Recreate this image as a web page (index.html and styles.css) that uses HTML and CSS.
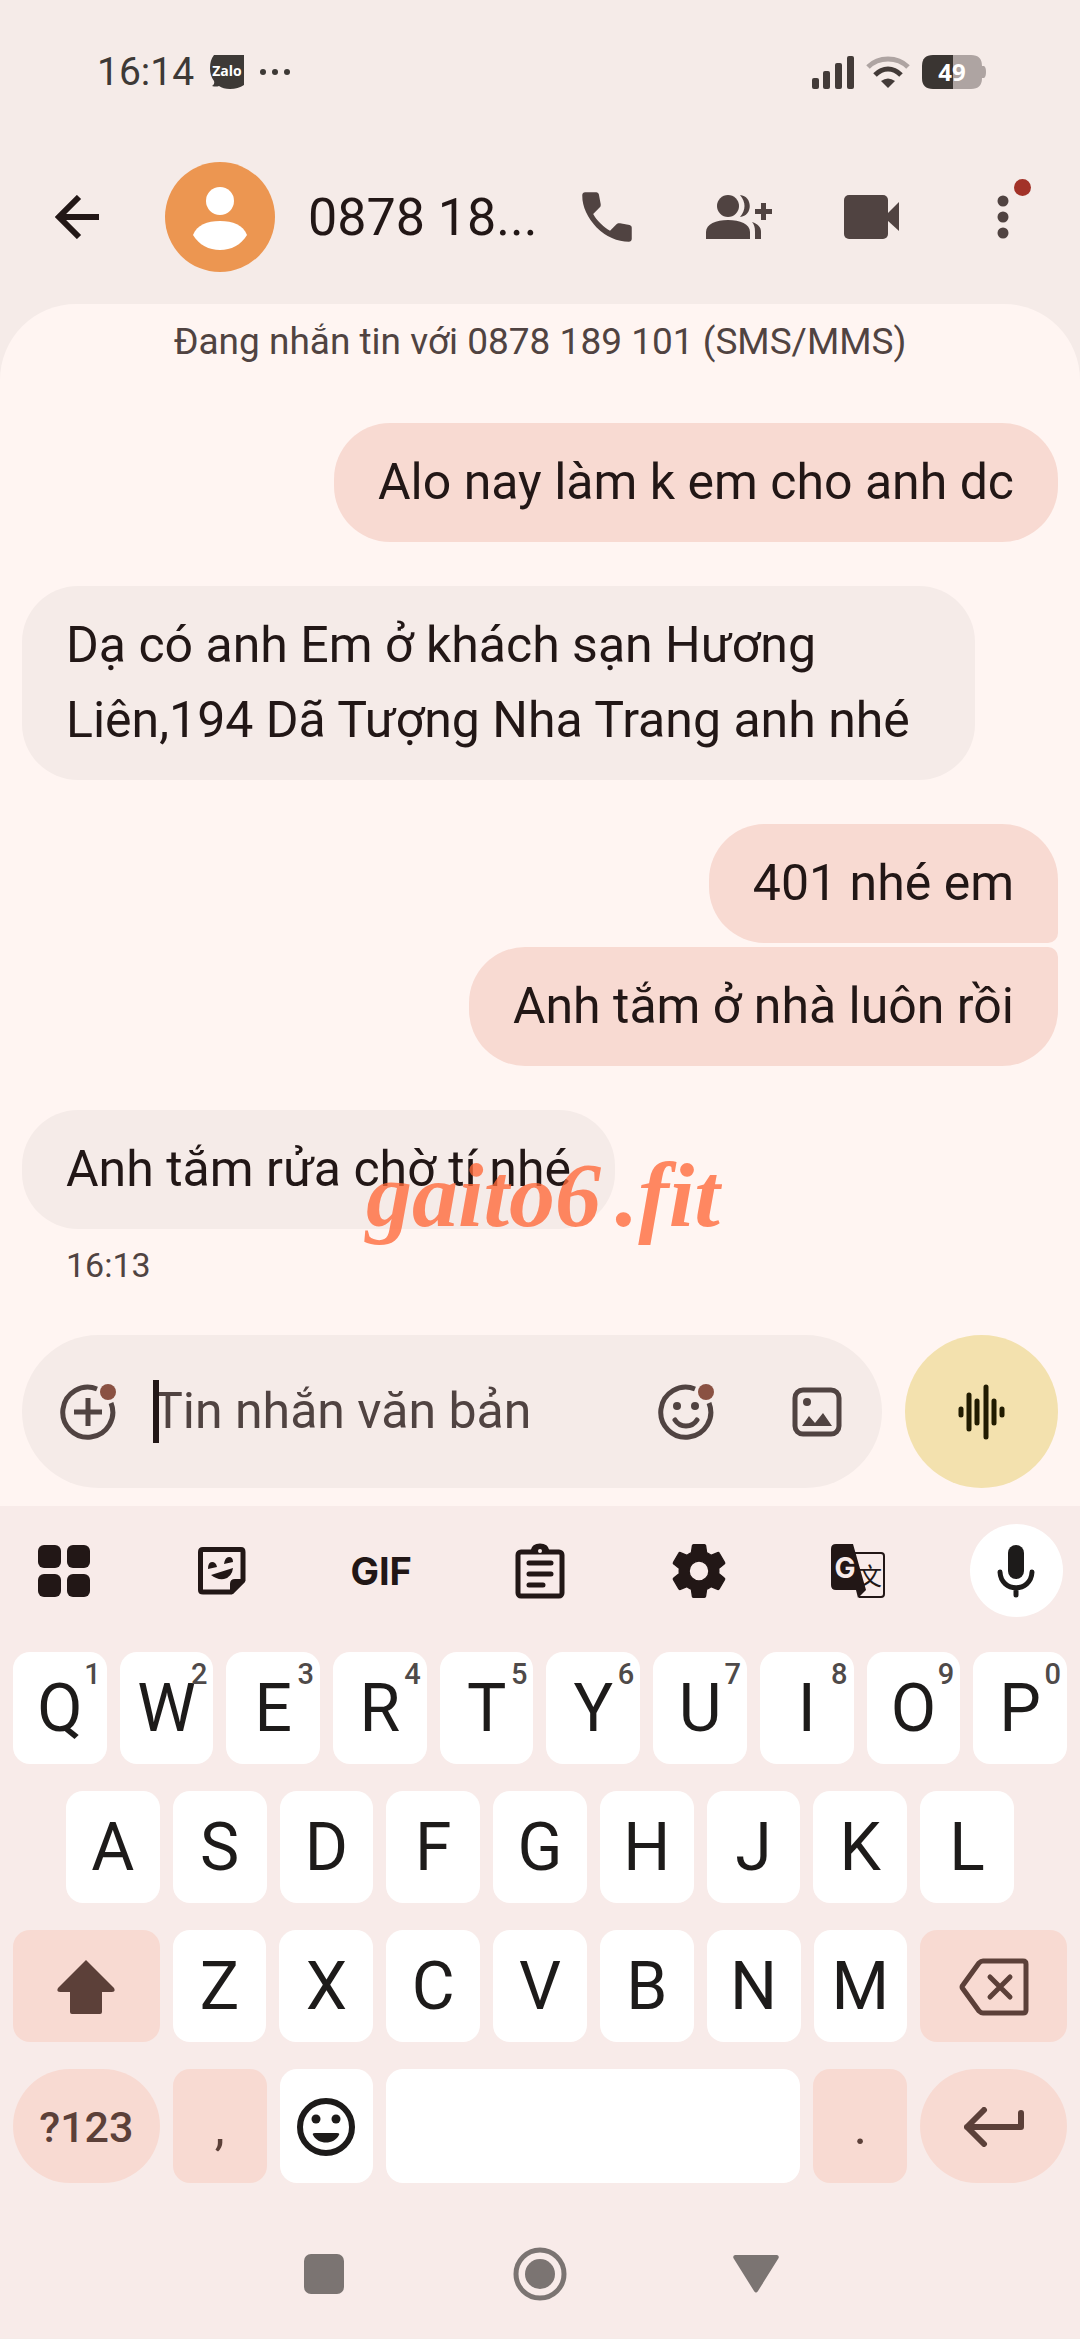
FILE: index.html
```html
<!DOCTYPE html>
<html lang="vi">
<head>
<meta charset="utf-8">
<meta name="viewport" content="width=device-width, initial-scale=1">
<title>0878 189 101</title>
<link rel="stylesheet" href="styles.css">
</head>
<body>
<div class="status">
  <span class="clock">16:14</span>
  <svg class="zalo" width="34" height="34" viewBox="0 0 34 34" aria-hidden="true">
    <path d="M4 0H34V30Q28 34 20 34Q13 34 9 31Q6 32 2 31Q5 29 4 26Q0 21 0 13Q0 5 4 0Z" fill="#3d3936"/>
    <text x="17" y="21" text-anchor="middle" class="zalo-text">Zalo</text>
  </svg>
  <svg width="30" height="6" viewBox="0 0 30 6" aria-hidden="true" fill="#3d3936"><circle cx="3" cy="3" r="3"/><circle cx="15" cy="3" r="3"/><circle cx="27" cy="3" r="3"/></svg>
  <span class="spacer"></span>
  <svg width="42" height="34" viewBox="0 0 42 34" aria-hidden="true" fill="#433b38"><rect x="0" y="23" width="7" height="11" rx="2"/><rect x="11" y="16" width="7" height="18" rx="2"/><rect x="23" y="8" width="7" height="26" rx="2"/><rect x="35" y="1" width="7" height="33" rx="2"/></svg>
  <svg class="wifi" width="44" height="34" viewBox="0 0 44 34" aria-hidden="true" fill="none" stroke-width="5">
    <path d="M2 12Q10 4 22 4T42 12" stroke="#aea4a2"/>
    <path d="M9 20Q15 14 22 14T35 20" stroke="#433b38"/>
    <path d="M22 33L15 26Q22 21 29 26Z" fill="#433b38"/>
  </svg>
  <svg width="64" height="34" viewBox="0 0 64 34" aria-hidden="true">
    <path d="M31 0H49Q60 0 60 11H62Q64 12 64 17T62 23H60Q60 34 49 34H31Z" fill="#aea4a2"/>
    <path d="M31 0H11Q0 0 0 11V23Q0 34 11 34H31Z" fill="#3a3532"/>
    <text x="30" y="26" text-anchor="middle" class="battery-text">49</text>
  </svg>
</div>

<header class="header">
  <button class="back" aria-label="Quay lại"><svg width="44" height="44" viewBox="0 0 44 44" fill="none" stroke="#221716" stroke-width="6"><path d="M44 22H4M24 2L4 22L24 42"/></svg></button>
  <svg class="avatar" width="110" height="110" viewBox="0 0 110 110" aria-hidden="true"><circle cx="55" cy="55" r="55" fill="#ec9651"/><circle cx="55" cy="39" r="14" fill="#fff"/><path d="M28 73C32 63 42 59 55 59S78 63 82 73C76 83 66 88 55 88S34 83 28 73Z" fill="#fff"/></svg>
  <h1 class="title">0878 18...</h1>
  <button class="action" aria-label="Gọi"><svg width="66" height="66" viewBox="0 0 24 24" fill="#504341"><path d="M19.95 21q-3.125 0-6.175-1.363t-5.55-3.862-3.862-5.55T3 4.05q0-.45.3-.75t.75-.3H8.1q.35 0 .625.238t.325.562l.65 3.5q.05.4-.025.675T9.4 8.45L6.975 10.9q.5.925 1.187 1.787t1.513 1.663q.775.775 1.625 1.438T13.1 17l2.35-2.35q.225-.225.588-.338t.712-.062l3.45.7q.35.1.575.363T21 15.9v4.05q0 .45-.3.75t-.75.3Z"/></svg></button>
  <button class="action" aria-label="Thêm người"><svg width="66" height="44" viewBox="0 0 66 44" fill="#504341"><circle cx="22" cy="11" r="11"/><path d="M34 0C47 1 47 21 34 22C40 15 40 7 34 0ZM0 44V37C0 29 10 25 22 25S44 29 44 37V44ZM46 27C52 29 55 32 55 37V44H49V37C49 32 48 29 46 27ZM55 8H60V14H66V19H60V25H55V19H49V14H55Z"/></svg></button>
  <button class="action" aria-label="Gọi video"><svg width="55" height="44" viewBox="0 0 55 44" fill="#504341"><rect width="44" height="44" rx="5"/><path d="M43 19L55 7V36L43 25Z"/></svg></button>
  <button class="action" aria-label="Tùy chọn khác"><svg width="12" height="44" viewBox="0 0 12 44" fill="#504341"><circle cx="6" cy="6" r="5.5"/><circle cx="6" cy="22" r="5.5"/><circle cx="6" cy="38" r="5.5"/></svg><span class="alert"></span></button>
</header>

<main class="chat">
  <p class="note">Đang nhắn tin với 0878 189 101 (SMS/MMS)</p>
  <div class="group sent"><p class="bubble">Alo nay làm k em cho anh dc</p></div>
  <div class="group"><p class="bubble">Dạ có anh Em ở khách sạn Hương Liên,194 Dã Tượng Nha Trang anh nhé</p></div>
  <div class="group sent">
    <p class="bubble first">401 nhé em</p>
    <p class="bubble last">Anh tắm ở nhà luôn rồi</p>
  </div>
  <div class="group">
    <p class="bubble">Anh tắm rửa chờ tí nhé</p>
    <span class="watermark">gaito6<span class="tld">.fit</span></span>
  </div>
  <time class="time">16:13</time>

  <form class="composer">
    <div class="pill">
      <button type="button" class="tool" aria-label="Thêm"><svg width="56" height="56" viewBox="0 0 56 56" fill="none" stroke="#504341" stroke-width="5"><path d="M37 5A25 25 0 1 0 51 19M28 14V42M14 28H42"/><circle cx="48" cy="8" r="8" fill="#8a5142" stroke="none"/></svg></button>
      <div class="field"><input class="input" type="text" placeholder="Tin nhắn văn bản" aria-label="Tin nhắn văn bản"><span class="caret"></span></div>
      <button type="button" class="tool" aria-label="Biểu tượng cảm xúc"><svg width="56" height="56" viewBox="0 0 56 56" fill="none" stroke="#504341" stroke-width="5"><path d="M37 5A25 25 0 1 0 51 19"/><path d="M17 36C22 44 34 44 39 36" stroke-linecap="round"/><g stroke="none" fill="#504341"><circle cx="19" cy="22" r="4"/><circle cx="37" cy="22" r="4"/></g><circle cx="48" cy="8" r="8" fill="#8a5142" stroke="none"/></svg></button>
      <button type="button" class="tool" aria-label="Hình ảnh"><svg width="50" height="50" viewBox="0 0 50 50" fill="#504341"><rect x="3" y="3" width="44" height="44" rx="8" fill="none" stroke="#504341" stroke-width="5"/><circle cx="15" cy="15" r="4"/><path d="M10 39L17 29L23 36L31 26L40 39Z"/></svg></button>
    </div>
    <button type="button" class="voice" aria-label="Ghi âm"><svg width="48" height="56" viewBox="0 0 48 56" fill="none" stroke="#211b00" stroke-width="5" stroke-linecap="round"><path d="M3 25V31M11 11V45M19 17V39M28 3V53M36 17V39M44 25V31"/></svg></button>
  </form>
</main>

<section class="keyboard">
  <div class="toolbar">
    <button class="kbtool" aria-label="Menu"><svg width="54" height="54" viewBox="0 0 54 54" fill="#221716"><rect x="1" y="1" width="23" height="23" rx="6"/><rect x="30" y="1" width="23" height="23" rx="6"/><rect x="1" y="30" width="23" height="23" rx="6"/><rect x="30" y="30" width="23" height="23" rx="6"/></svg></button>
    <button class="kbtool" aria-label="Nhãn dán"><svg width="50" height="50" viewBox="0 0 50 50" fill="#221716"><path d="M6 3.500H44Q46 3.500 46 6V34L34 46H6Q3.500 46 3.500 44V6Q3.500 3.500 6 3.500Z" fill="none" stroke="#221716" stroke-width="5"/><path d="M48 33H38Q33 33 33 38V48H36L48 36ZM11 23Q11 16 15 16T20 21ZM27 18Q28 11 32 11T36 16ZM14 29L36 22Q35 31 27 33Q20 34 14 29Z"/></svg></button>
    <button class="kbtool gif">GIF</button>
    <button class="kbtool" aria-label="Bảng nhớ tạm"><svg width="50" height="56" viewBox="0 0 50 56" fill="none" stroke="#221716" stroke-width="5" stroke-linecap="round"><rect x="3" y="9" width="44" height="44" rx="3"/><path d="M14 20H36M14 31H36M14 42H28"/><path d="M18 8Q19 3 25 3T32 8Z" fill="#221716"/><circle cx="25" cy="8" r="2" fill="#f8ebe9" stroke="none"/></svg></button>
    <button class="kbtool" aria-label="Cài đặt"><svg width="66" height="66" viewBox="0 0 24 24" fill="#221716"><path stroke="#221716" stroke-width=".5" stroke-linejoin="round" d="M19.140 12.940c.04-.3.060-.61.060-.94 0-.32-.02-.64-.07-.94l2.030-1.580c.18-.14.230-.41.120-.61l-1.920-3.320c-.12-.22-.37-.29-.59-.22l-2.390.96c-.5-.38-1.030-.7-1.620-.94l-.36-2.540c-.04-.24-.24-.41-.48-.41h-3.840c-.24 0-.43.17-.47.41l-.36 2.540c-.59.24-1.130.57-1.620.94l-2.390-.96c-.22-.08-.47 0-.59.22L2.740 8.870c-.12.21-.08.47.120.61l2.030 1.580c-.05.3-.09.63-.09.94s.020.64.070.94l-2.030 1.580c-.18.14-.23.41-.12.610l1.920 3.320c.12.22.37.29.59.22l2.390-.96c.5.38 1.030.7 1.620.94l.36 2.540c.05.24.24.41.48.41h3.840c.24 0 .44-.17.47-.41l.36-2.540c.59-.24 1.130-.56 1.620-.94l2.390.96c.22.080.47 0 .59-.22l1.920-3.320c.12-.22.070-.47-.12-.61l-2.010-1.580zM12 15.600c-1.980 0-3.600-1.620-3.600-3.600s1.620-3.600 3.600-3.600 3.600 1.620 3.600 3.600-1.620 3.600-3.600 3.600z"/></svg></button>
    <button class="kbtool" aria-label="Dịch"><svg width="54" height="54" viewBox="0 0 54 54"><path d="M24 9H50Q53 9 53 12V50Q53 53 50 53H28" fill="none" stroke="#221716" stroke-width="2"/><text x="27" y="41" class="han">文</text><path d="M5 0H22L35 46L27 54L25 46H5Q0 46 0 41V5Q0 0 5 0Z" fill="#221716"/><text x="14" y="34" text-anchor="middle" class="gletter">G</text></svg></button>
    <button class="kbtool mic" aria-label="Giọng nói"><svg width="38" height="54" viewBox="0 0 38 54" fill="none" stroke="#1d1b1a" stroke-width="5" stroke-linecap="round"><rect x="11" y="1" width="16" height="34" rx="8" fill="#1d1b1a" stroke="none"/><path d="M3 28C4 49 34 49 35 28M19 44V51"/></svg></button>
  </div>

  <div class="keys">
    <div class="row row-top">
      <button class="key">Q<span class="alt">1</span></button><button class="key">W<span class="alt">2</span></button><button class="key">E<span class="alt">3</span></button><button class="key">R<span class="alt">4</span></button><button class="key">T<span class="alt">5</span></button><button class="key">Y<span class="alt">6</span></button><button class="key">U<span class="alt">7</span></button><button class="key">I<span class="alt">8</span></button><button class="key">O<span class="alt">9</span></button><button class="key">P<span class="alt">0</span></button>
    </div>
    <div class="row row-home">
      <button class="key">A</button><button class="key">S</button><button class="key">D</button><button class="key">F</button><button class="key">G</button><button class="key">H</button><button class="key">J</button><button class="key">K</button><button class="key">L</button>
    </div>
    <div class="row row-shift">
      <button class="key mod" aria-label="Shift"><svg width="58" height="56" viewBox="0 0 58 56" fill="#5c4039"><path d="M29 1L57 29Q59 33 55 33H45V53Q45 55 43 55H15Q13 55 13 53V33H3Q-1 33 1 29Z"/></svg></button>
      <button class="key">Z</button><button class="key">X</button><button class="key">C</button><button class="key">V</button><button class="key">B</button><button class="key">N</button><button class="key">M</button>
      <button class="key mod" aria-label="Xóa"><svg width="70" height="58" viewBox="0 0 70 58" fill="none" stroke="#5c4039" stroke-width="5" stroke-linecap="round"><path d="M24 3H64Q67 3 67 6V52Q67 55 64 55H24Q22 55 20 53L4 31Q2 29 4 27L20 5Q22 3 24 3Z"/><path d="M31 19L51 39M51 19L31 39"/></svg></button>
    </div>
    <div class="row row-space">
      <button class="key mod round">?123</button>
      <button class="key mod small">,</button>
      <button class="key" aria-label="Biểu tượng"><svg width="58" height="58" viewBox="0 0 58 58" fill="#1d1b1a"><circle cx="29" cy="29" r="26" fill="none" stroke="#1d1b1a" stroke-width="6"/><circle cx="19" cy="21" r="4.500"/><circle cx="39" cy="21" r="4.500"/><path d="M18 35H40Q43 35 42 37C37 47 21 47 16 37Q15 35 18 35Z"/></svg></button>
      <button class="key" aria-label="Dấu cách"></button>
      <button class="key mod small">.</button>
      <button class="key mod round" aria-label="Nhập"><svg width="60" height="40" viewBox="0 0 60 40" fill="none" stroke="#5c4039" stroke-width="6" stroke-linecap="round" stroke-linejoin="round"><path d="M57 6V20H3M20 3L3 20L20 37"/></svg></button>
    </div>
  </div>

  <nav class="nav">
    <button class="navbtn" aria-label="Gần đây"><svg width="40" height="40" viewBox="0 0 40 40"><rect width="40" height="40" rx="7" fill="#7b7472"/></svg></button>
    <button class="navbtn" aria-label="Trang chủ"><svg width="54" height="54" viewBox="0 0 54 54"><circle cx="27" cy="27" r="24" fill="none" stroke="#7b7472" stroke-width="5"/><circle cx="27" cy="27" r="15" fill="#7b7472"/></svg></button>
    <button class="navbtn" aria-label="Trở về"><svg width="46" height="38" viewBox="0 0 46 38" fill="#7b7472"><path d="M2 0H44Q47 1 45 4L25 36Q23 39 21 36L1 4Q-1 1 2 0Z"/></svg></button>
  </nav>
</section>
</body>
</html>
```
FILE: styles.css
```css
* { box-sizing: border-box; }
body {
  margin: 0;
  background: #f5ebe8;
  color: #221716;
  font-family: Roboto, "Noto Sans", sans-serif;
}
p, h1 { margin: 0; font-weight: 400; }
svg { display: block; flex: none; }
button {
  margin: 0;
  padding: 0;
  border: 0;
  background: none;
  color: inherit;
  font: inherit;
  display: flex;
  align-items: center;
  justify-content: center;
}

.status { display: flex; align-items: center; height: 144px; padding: 0 94px 0 97px; }
.clock { font-size: 39px; color: #3d3936; }
.zalo { margin: 0 16px; }
.zalo-text { font: 700 14px "Open Sans", sans-serif; fill: #fff; }
.battery-text { font: 700 24px "Noto Sans", sans-serif; fill: #fff; }
.spacer { flex: 1; }
.wifi { margin: 0 12px; }

.header { display: flex; align-items: center; height: 146px; margin-bottom: 14px; padding-right: 11px; }
.back { width: 154px; height: 132px; flex: none; }
.avatar { margin: 0 33px 0 11px; }
.title { flex: 1; min-width: 0; font-size: 52px; white-space: nowrap; }
.action { position: relative; width: 132px; height: 132px; flex: none; }
.alert { position: absolute; top: 28px; right: 38px; width: 17px; height: 17px; border-radius: 50%; background: #a23228; }

.chat { padding: 13px 22px 18px; border-radius: 76px 76px 0 0; background: #fff5f2; }
.note { margin-bottom: 56px; text-align: center; font-size: 37px; line-height: 50px; color: #504341; }
.group { position: relative; display: flex; flex-direction: column; align-items: flex-start; gap: 4px; margin-bottom: 44px; }
.group.sent { align-items: flex-end; }
.bubble { max-width: 92%; padding: 22px 44px; border-radius: 56px; background: #f5ebe8; font-size: 50px; line-height: 75px; }
.sent .bubble { background: #f8dad2; }
.sent .first { border-bottom-right-radius: 10px; }
.sent .last { border-top-right-radius: 10px; }
.watermark { position: absolute; left: 344px; top: 30px; font: italic 700 92px/110px "Liberation Serif", serif; color: rgba(255, 104, 56, .78); }
.tld { margin-left: 14px; }
.time { display: block; margin: -30px 0 48px 44px; font-size: 34px; line-height: 44px; color: #504341; }

.composer { display: flex; gap: 23px; }
.pill { display: flex; align-items: center; flex: 1; height: 153px; border-radius: 77px; background: #f5ebe8; }
.tool { width: 131px; height: 131px; flex: none; }
.field { position: relative; flex: 1; min-width: 0; }
.input { display: block; width: 100%; padding: 0; border: 0; outline: 0; background: none; font: 50px/75px Roboto, "Noto Sans", sans-serif; color: #221716; }
.input::placeholder { color: #504341; opacity: 1; }
.caret { position: absolute; left: 0; top: 6px; width: 6px; height: 63px; background: #221716; }
.voice { width: 153px; height: 153px; border-radius: 50%; background: #f3e1ae; }

.keyboard { background: #f8ebe9; }
.toolbar { display: flex; justify-content: space-between; padding: 18px 17px 35px; }
.kbtool { width: 93px; height: 93px; }
.gif { font: 700 38px Inter, sans-serif; color: #221716; }
.mic { border-radius: 50%; background: #fff; }
.han { font: 24px "Noto Sans CJK SC", sans-serif; fill: #221716; }
.gletter { font: 700 28px Inter, sans-serif; fill: #f8ebe9; }

.keys { display: grid; gap: 27px; padding: 0 13px; }
.row { display: grid; gap: 13px; height: 112px; }
.row-top { grid-template-columns: repeat(10, 1fr); }
.row-home { grid-template-columns: repeat(9, 1fr); padding: 0 53px; }
.row-shift { grid-template-columns: 147fr repeat(7, 94fr) 147fr; }
.row-space { grid-template-columns: 147fr 94fr 94fr 415fr 94fr 147fr; height: 114px; }
.key { position: relative; min-width: 0; padding-top: 2px; border-radius: 17px; background: #fff; font-size: 66px; line-height: 80px; color: #1d1b1a; }
.alt { position: absolute; top: 7px; right: 6px; font-size: 29px; font-weight: 500; line-height: 30px; color: #4f4a49; }
.mod { background: #f8dad2; color: #5c4039; }
.round { border-radius: 57px; font-size: 43px; font-weight: 500; }
.small { font-size: 50px; }

.nav { display: grid; grid-template-columns: repeat(3, 1fr); width: 60%; margin: 0 auto; padding-top: 26px; }
.navbtn { height: 129px; }
```
